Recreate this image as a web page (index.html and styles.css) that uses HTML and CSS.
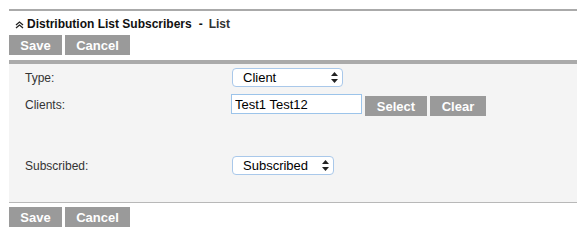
FILE: index.html
```html
<!DOCTYPE html>
<html lang="en">
<head>
    <meta charset="UTF-8">
    <meta name="viewport" content="width=device-width, initial-scale=1.0">
    <title>Distribution List Subscribers</title>
    <link rel="stylesheet" href="styles.css">
</head>
<body>

    <div class="page">

        <!-- header -->
        <div class="header">
            <div class="title">
                <svg class="collapse-icon" width="9" height="8" viewBox="0 0 9 8">
                    <path d="M1 4 L4.5 1 L8 4 M1 7 L4.5 4 L8 7" fill="none" stroke="#222" stroke-width="1.3"/>
                </svg>
                <span class="title-main">Distribution List Subscribers</span>
                <span class="title-sep">-</span>
                <span class="title-sub">List</span>
            </div>
            <div class="actions">
                <button class="btn btn-save">Save</button>
                <button class="btn btn-cancel">Cancel</button>
            </div>
        </div>

        <!-- form panel -->
        <div class="panel">
            <div class="row row-type">
                <label>Type:</label>
                <div class="select-wrap select-type">
                    <select>
                        <option>Client</option>
                    </select>
                    <svg class="select-arrows" width="7" height="11" viewBox="0 0 7 11">
                        <path d="M3.5 0 L7 4 L0 4 Z M0 7 L7 7 L3.5 11 Z" fill="#222"/>
                    </svg>
                </div>
            </div>
            <div class="row row-clients">
                <label>Clients:</label>
                <div class="controls">
                    <input type="text" value="Test1 Test12">
                    <button class="btn btn-select">Select</button>
                    <button class="btn btn-clear">Clear</button>
                </div>
            </div>
            <div class="row row-subscribed">
                <label>Subscribed:</label>
                <div class="select-wrap select-subscribed">
                    <select>
                        <option>Subscribed</option>
                    </select>
                    <svg class="select-arrows" width="7" height="11" viewBox="0 0 7 11">
                        <path d="M3.5 0 L7 4 L0 4 Z M0 7 L7 7 L3.5 11 Z" fill="#222"/>
                    </svg>
                </div>
            </div>
        </div>

        <!-- footer -->
        <div class="actions footer">
            <button class="btn btn-save">Save</button>
            <button class="btn btn-cancel">Cancel</button>
        </div>
    </div>

</body>
</html>
```

FILE: styles.css
```css
body {
    font-family: "Liberation Sans", Arial, sans-serif;
    background-color: #fff;
    margin: 0;
    padding: 0;
    color: #222;
}

.page {
    padding-left: 9px;
    padding-top: 9px;
}

.header {
    border-top: 2px solid #aaa;
}

.title {
    display: flex;
    align-items: center;
    height: 23px;
    padding-left: 6px;
    margin-top: 1px;
    font-size: 12px;
    font-weight: bold;
    color: #111;
}

.collapse-icon {
    margin-right: 3px;
    margin-top: 2px;
}

.title-sep {
    margin: 0 6px 0 7px;
}

.title-sub {
    color: #333;
}

.actions {
    display: flex;
    gap: 3px;
}

.btn {
    height: 20px;
    padding: 0;
    background-color: #9a9a9a;
    color: white;
    border: none;
    font-family: "Liberation Sans", Arial, sans-serif;
    font-size: 13px;
    font-weight: bold;
    cursor: pointer;
}

.btn-save {
    width: 53px;
}

.btn-cancel {
    width: 65px;
}

.btn-select {
    width: 62px;
    margin-left: 3px;
}

.btn-clear {
    width: 56px;
    margin-left: 3px;
}

.panel {
    margin-top: 5px;
    border-top: 4px solid #aaa;
    border-bottom: 1px solid #b8b8b8;
    background-color: #f4f4f4;
    height: 134px;
    padding-top: 4px;
    box-sizing: content-box;
}

.row {
    display: flex;
    align-items: center;
}

.row label {
    width: 206px;
    padding-left: 16px;
    font-size: 12px;
    color: #333;
}

.row-clients {
    margin-top: 7px;
}

.row-subscribed {
    margin-top: 40px;
}

.controls {
    display: flex;
    align-items: flex-start;
}

.controls .btn {
    margin-top: 2px;
}

input {
    width: 131px;
    height: 20px;
    box-sizing: border-box;
    margin: 0;
    padding: 0 3px;
    border: 1px solid #9cc4ea;
    background: white;
    font-family: "Liberation Sans", Arial, sans-serif;
    font-size: 13px;
    color: #000;
}

.select-wrap {
    position: relative;
    margin-left: 1px;
}

.select-wrap select {
    appearance: none;
    -webkit-appearance: none;
    height: 19px;
    box-sizing: border-box;
    margin: 0;
    padding: 0 0 0 10px;
    border: 1px solid #a9c8ea;
    border-radius: 4px;
    background: white;
    font-family: "Liberation Sans", Arial, sans-serif;
    font-size: 13px;
    color: #000;
}

.select-type select {
    width: 111px;
}

.select-subscribed select {
    width: 102px;
}

.select-arrows {
    position: absolute;
    right: 5px;
    top: 4px;
}

.footer {
    margin-top: 4px;
}
```
